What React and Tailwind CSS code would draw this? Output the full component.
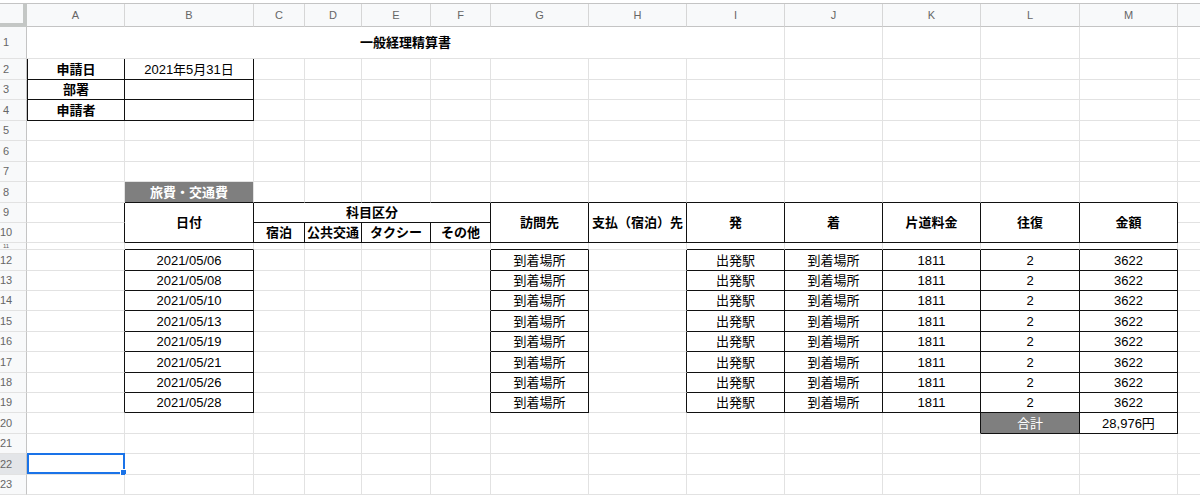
import React from "react";

const COLS = [
  { k: "A", w: "w-[98px]" },
  { k: "B", w: "w-[129px]" },
  { k: "C", w: "w-[51px]" },
  { k: "D", w: "w-[57px]" },
  { k: "E", w: "w-[69px]" },
  { k: "F", w: "w-[60px]" },
  { k: "G", w: "w-[98px]" },
  { k: "H", w: "w-[98px]" },
  { k: "I", w: "w-[98px]" },
  { k: "J", w: "w-[98px]" },
  { k: "K", w: "w-[98px]" },
  { k: "L", w: "w-[99px]" },
  { k: "M", w: "w-[98px]" },
];

const ROW_H = {
  2: "h-[21px]",
  3: "h-[20px]",
  4: "h-[21px]",
  5: "h-[20px]",
  6: "h-[21px]",
  7: "h-[20px]",
  8: "h-[21px]",
  11: "h-[7px]",
  12: "h-[21px]",
  13: "h-[20px]",
  14: "h-[20px]",
  15: "h-[21px]",
  16: "h-[20px]",
  17: "h-[21px]",
  18: "h-[20px]",
  19: "h-[20px]",
  20: "h-[21px]",
  21: "h-[20px]",
  22: "h-[21px]",
  23: "h-[20px]",
};

// bordered ranges [r1, c1, r2, c2] (c: 0 = A)
const BOXES = [
  [2, 0, 4, 1],
  [9, 1, 10, 12],
  [12, 1, 19, 1],
  [12, 6, 19, 6],
  [12, 8, 19, 12],
  [20, 11, 20, 12],
];

const inBox = (r, c) =>
  BOXES.some(([r1, c1, r2, c2]) => r >= r1 && r <= r2 && c >= c1 && c <= c2);

const dates = [
  "2021/05/06",
  "2021/05/08",
  "2021/05/10",
  "2021/05/13",
  "2021/05/19",
  "2021/05/21",
  "2021/05/26",
  "2021/05/28",
];

const CELLS = {
  "2,0": { text: "申請日", bold: true },
  "2,1": { text: "2021年5月31日" },
  "3,0": { text: "部署", bold: true },
  "4,0": { text: "申請者", bold: true },
  "8,1": { text: "旅費・交通費", bold: true, fill: true },
  "20,11": { text: "合計", fill: true },
  "20,12": { text: "28,976円" },
};

dates.forEach((d, i) => {
  const r = 12 + i;
  CELLS[`${r},1`] = { text: d };
  CELLS[`${r},6`] = { text: "到着場所" };
  CELLS[`${r},8`] = { text: "出発駅" };
  CELLS[`${r},9`] = { text: "到着場所" };
  CELLS[`${r},10`] = { text: "1811" };
  CELLS[`${r},11`] = { text: "2" };
  CELLS[`${r},12`] = { text: "3622" };
});

function Cell({ r, c, w, h = "", text, bold, fill, rb, bb, selected }) {
  const rightBlack = rb ?? (inBox(r, c) || inBox(r, c + 1));
  const bottomBlack = bb ?? (inBox(r, c) || inBox(r + 1, c));
  const leftBlack = c === 0 && inBox(r, c);
  return (
    <div
      className={[
        "relative flex shrink-0 items-center justify-center whitespace-nowrap border-r border-b text-[13px] leading-none",
        w,
        h,
        rightBlack ? "border-r-[#111]" : "border-r-[#e2e2e2]",
        bottomBlack ? "border-b-[#111]" : "border-b-[#e2e2e2]",
        leftBlack ? "border-l border-l-[#111]" : "",
        fill ? "bg-[#7f7f7f] text-white" : "text-black",
        bold ? "font-bold" : "",
      ].join(" ")}
    >
      {text}
      {selected && (
        <div className="absolute -top-px left-0 -right-px bottom-0 border-2 border-[#1a73e8]">
          <div className="absolute -bottom-[4px] -right-[4px] h-[7px] w-[7px] border border-white bg-[#1a73e8]" />
        </div>
      )}
    </div>
  );
}

function RowHead({ n, h = "", active }) {
  const tiny = n === 11;
  return (
    <div
      className={`flex w-[27px] shrink-0 overflow-hidden border-r border-r-[#c4c4c4] border-b border-b-[#e2e2e2] text-[#666] ${
        tiny ? "items-start text-[6px]" : "items-center text-[11px]"
      } ${active ? "bg-[#e3e5e8]" : "bg-[#f8f9fa]"} ${h}`}
    >
      <span className={`w-[12px] text-center ${tiny ? "leading-[6px]" : "leading-none"}`}>{n}</span>
    </div>
  );
}

function Tail({ h = "" }) {
  return <div className={`min-w-0 flex-1 border-b border-b-[#e2e2e2] ${h}`} />;
}

function Row({ r }) {
  return (
    <div className={`flex ${ROW_H[r]}`}>
      <RowHead n={r} active={r === 22} />
      {COLS.map((col, c) => (
        <Cell key={col.k} r={r} c={c} w={col.w} selected={r === 22 && c === 0} {...(CELLS[`${r},${c}`] || {})} />
      ))}
      <Tail />
    </div>
  );
}

function HeaderBlock() {
  const tall = [
    { c: 6, text: "訪問先" },
    { c: 7, text: "支払（宿泊）先" },
    { c: 8, text: "発" },
    { c: 9, text: "着" },
    { c: 10, text: "片道料金" },
    { c: 11, text: "往復" },
    { c: 12, text: "金額" },
  ];
  const sub = [
    { c: 2, text: "宿泊" },
    { c: 3, text: "公共交通" },
    { c: 4, text: "タクシー" },
    { c: 5, text: "その他" },
  ];
  return (
    <div className="flex h-[40px]">
      <div className="flex flex-col">
        <RowHead n={9} h="h-[20px]" />
        <RowHead n={10} h="h-[20px]" />
      </div>
      <div className="flex flex-col">
        <Cell r={9} c={0} w="w-[98px]" h="h-[20px]" />
        <Cell r={10} c={0} w="w-[98px]" h="h-[20px]" />
      </div>
      <Cell r={9} c={1} w="w-[129px]" text="日付" bold rb bb />
      <div className="flex w-[237px] shrink-0 flex-col">
        <Cell r={9} c={2} w="w-[237px]" h="h-[20px]" text="科目区分" bold rb bb />
        <div className="flex h-[20px]">
          {sub.map((s) => (
            <Cell key={s.c} r={10} c={s.c} w={COLS[s.c].w} text={s.text} bold rb bb />
          ))}
        </div>
      </div>
      {tall.map((t) => (
        <Cell key={t.c} r={9} c={t.c} w={COLS[t.c].w} text={t.text} bold rb bb />
      ))}
      <div className="flex min-w-0 flex-1 flex-col">
        <Tail h="h-[20px]" />
        <Tail h="h-[20px]" />
      </div>
    </div>
  );
}

export default function App() {
  const before = [2, 3, 4, 5, 6, 7, 8];
  const after = [11, 12, 13, 14, 15, 16, 17, 18, 19, 20, 21, 22, 23];
  return (
    <div className="h-[495px] w-[1200px] overflow-hidden bg-white font-['Liberation_Sans','Noto_Sans_CJK_JP',sans-serif]">
      <div className="h-[3px] bg-white" />

      {/* column letters */}
      <div className="flex h-[24px] border-t border-t-[#c4c4c4]">
        <div className="w-[27px] shrink-0 border-r-4 border-b-4 border-r-[#c4c7c5] border-b-[#c4c7c5] bg-[#f8f9fa]" />
        {COLS.map((col) => (
          <div
            key={col.k}
            className={`flex shrink-0 items-center justify-center border-r border-r-[#d6d6d6] border-b border-b-[#c4c4c4] bg-[#f8f9fa] text-[11px] text-[#666] ${col.w}`}
          >
            {col.k}
          </div>
        ))}
        <div className="min-w-0 flex-1 border-b border-b-[#c4c4c4] bg-[#f8f9fa]" />
      </div>

      {/* row 1: title merged A1:I1 */}
      <div className="flex h-[32px]">
        <RowHead n={1} />
        <div className="flex w-[758px] shrink-0 items-center justify-center border-r border-b border-r-[#e2e2e2] border-b-[#e2e2e2] text-[13px] font-bold text-black">
          一般経理精算書
        </div>
        {COLS.slice(9).map((col, i) => (
          <Cell key={col.k} r={1} c={9 + i} w={col.w} />
        ))}
        <Tail />
      </div>

      {before.map((r) => (
        <Row key={r} r={r} />
      ))}
      <HeaderBlock />
      {after.map((r) => (
        <Row key={r} r={r} />
      ))}
    </div>
  );
}
